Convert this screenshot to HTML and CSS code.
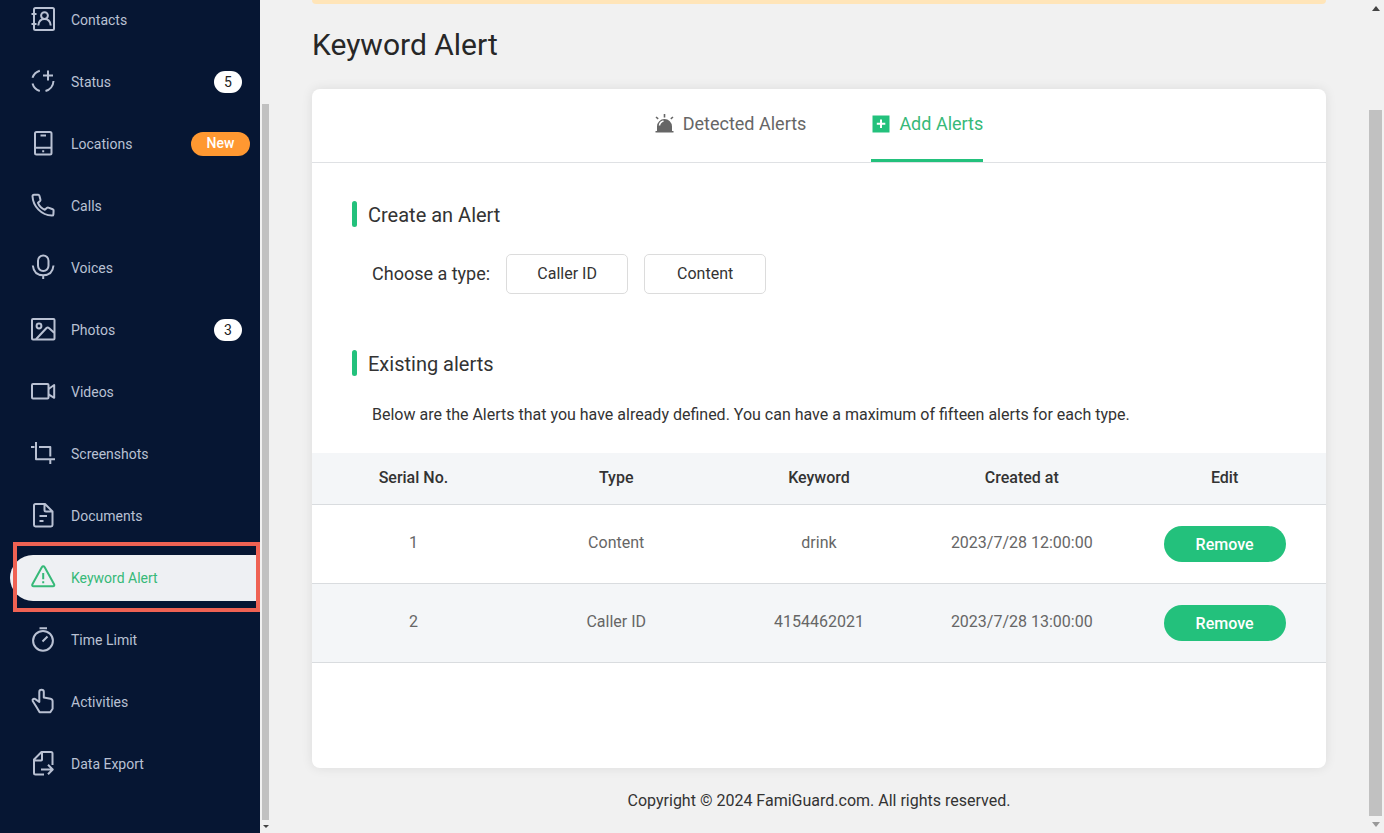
FILE: index.html
```html
<!DOCTYPE html>
<html lang="en">
<head>
<meta charset="utf-8">
<title>Keyword Alert</title>
<link rel="stylesheet" href="styles.css">
</head>
<body>
<div class="app">
  <nav class="sidebar" aria-label="Features">
    <ul class="menu">
      <li><a class="item" href="#"><svg class="icon" viewBox="0 0 26 26"><rect x="4" y="2" width="20" height="22" rx="1.5"/><path d="M1.500 8h5M1.500 18h5"/><circle cx="14.500" cy="9.600" r="3.400"/><path d="M8.300 19.500c.4-3.800 2.600-6.400 6.200-6.400s5.800 2.600 6.200 6.400"/></svg><span class="label">Contacts</span></a></li>
      <li><a class="item" href="#"><svg class="icon" viewBox="0 0 26 26"><path d="M9.800 2.800A11 11 0 0 0 2.500 9.800M2.500 15.500A11 11 0 0 0 9.800 23M15.500 23A11 11 0 0 0 23.500 13M18 2.500v10M13 7.500h10"/></svg><span class="label">Status</span><span class="count">5</span></a></li>
      <li><a class="item" href="#"><svg class="icon" viewBox="0 0 26 26"><rect x="5" y="2" width="16.500" height="22.500" rx="1.500"/><path d="M5 17.800h16.500M10.500 5.500h5.500M12.200 21.200h2"/></svg><span class="label">Locations</span><span class="new">New</span></a></li>
      <li><a class="item" href="#"><svg class="icon" viewBox="0 0 26 26"><path d="M4 2.800h4.200c.6 0 1 .3 1.200.9l1 3.900c.1.500 0 1-.3 1.300L8 10.800c1.200 3.200 3.700 5.500 6.800 7l2.300-2c.4-.3.900-.4 1.300-.2l4.300 1.700c.6.2.9.7.9 1.200l-.2 3.900c0 .8-.7 1.200-1.500 1.200C11.500 23.300 3 14.500 2.500 4.300c0-.9.600-1.500 1.500-1.500z"/></svg><span class="label">Calls</span></a></li>
      <li><a class="item" href="#"><svg class="icon" viewBox="0 0 26 26"><rect x="8" y="1.500" width="10.500" height="15.500" rx="5.200"/><path d="M2.800 11.500c.7 6.300 4.600 9.800 10.400 9.800s9.700-3.500 10.300-9.800M13.200 21.300v3.700"/></svg><span class="label">Voices</span></a></li>
      <li><a class="item" href="#"><svg class="icon" viewBox="0 0 26 26"><rect x="2" y="3" width="22.500" height="20.500" rx="1"/><circle cx="9" cy="10" r="2.400"/><path d="M6 23.300 16.500 12c.8-.8 1.600-.8 2.400 0l5.300 4.800"/></svg><span class="label">Photos</span><span class="count">3</span></a></li>
      <li><a class="item" href="#"><svg class="icon" viewBox="0 0 26 26"><rect x="2" y="6" width="16.500" height="14.500" rx="1"/><path d="m18.500 11 5.700-4v12.800l-5.700-3.500"/></svg><span class="label">Videos</span></a></li>
      <li><a class="item" href="#"><svg class="icon" viewBox="0 0 26 26"><path d="M1 7h3.500M6 2v17.300h19M9 7h11.300v9.500M20.300 19.300v4.700"/></svg><span class="label">Screenshots</span></a></li>
      <li><a class="item" href="#"><svg class="icon" viewBox="0 0 26 26"><path d="M15 2H5.500C4.600 2 4 2.600 4 3.500V23c0 .8.600 1.400 1.500 1.400H21c.9 0 1.500-.6 1.500-1.400V9.500zM14.500 2.300V8c0 .9.600 1.500 1.500 1.500h6.300M9.500 14h7.500M9.500 19h4"/></svg><span class="label">Documents</span></a></li>
      <li class="marked"><a class="item active" href="#" aria-current="page"><svg class="icon" viewBox="0 0 26 26"><path d="M11.800 3.200 2.400 20.300c-.6 1.100 0 2 1.200 2h19.300c1.200 0 1.800-.9 1.200-2L14.700 3.200c-.8-1.200-2.100-1.200-2.900 0zM13.200 9v6.300M13.200 17.300v2"/></svg><span class="label">Keyword Alert</span></a></li>
      <li><a class="item" href="#"><svg class="icon" viewBox="0 0 26 26"><circle cx="13" cy="14.800" r="9.900"/><path d="M9.500 2.200h7.500M12.500 15.500l5-5"/></svg><span class="label">Time Limit</span></a></li>
      <li><a class="item" href="#"><svg class="icon" viewBox="0 0 26 26"><path d="M9.300 14V4c0-3 4.500-3 4.500 0v5.600l6.700 1.200c1.400.3 2.100 1.200 2.100 2.500v7.500l-2.300 3.500H9.600L6.800 19.500 2.700 13c-.7-1.800 1.500-3 3-1.600z"/></svg><span class="label">Activities</span></a></li>
      <li><a class="item" href="#"><svg class="icon" viewBox="0 0 26 26"><path d="M14 24.500H5.500c-.9 0-1.500-.6-1.500-1.500V9.500L11.500 2H21c.9 0 1.500.6 1.500 1.500V15M4.300 10.500h6.900c.5 0 .8-.3.800-.8V2.300M11 19.500h11.500M18 14.800l4.700 4.700-4.700 4.700"/></svg><span class="label">Data Export</span></a></li>
    </ul>
  </nav>
  <div class="rail rail-narrow" aria-hidden="true">
    <span class="thumb"></span>
    <svg class="arrow" viewBox="0 0 8 5"><path d="M1 1h6L4 4z"/></svg>
  </div>
  <main class="main">
    <div class="notice"></div>
    <h1 class="title">Keyword Alert</h1>
    <section class="card">
      <div class="tabs" role="tablist">
        <button class="tab" role="tab" aria-selected="false"><svg class="tab-icon" viewBox="0 0 19 20"><path d="M.5 18.500V17H2v-4.500a7.500 7.500 0 0 1 15 0V17h1.500v1.500z"/><path class="beam" d="M9.500 0v3.500M1 3l2.200 1.800M18 3l-2.200 1.800"/><path class="shine" d="M4.500 11.500c.2-2.500 1.600-4 4-4.600"/></svg>Detected Alerts</button>
        <button class="tab selected" role="tab" aria-selected="true"><svg class="tab-icon" viewBox="0 0 19 20"><path d="M1.500 1.500h17v17h-17z"/><path class="plus" d="M10 5.500v8.500M5.800 9.800h8.500"/></svg>Add Alerts</button>
      </div>
      <h2 class="heading">Create an Alert</h2>
      <div class="types">
        <span class="types-label" id="types">Choose a type:</span>
        <div class="choices" role="group" aria-labelledby="types">
          <button class="choice">Caller ID</button>
          <button class="choice">Content</button>
        </div>
      </div>
      <h2 class="heading">Existing alerts</h2>
      <p class="hint">Below are the Alerts that you have already defined. You can have a maximum of fifteen alerts for each type.</p>
      <table class="alerts">
        <thead>
          <tr><th>Serial No.</th><th>Type</th><th>Keyword</th><th>Created at</th><th>Edit</th></tr>
        </thead>
        <tbody>
          <tr><td>1</td><td>Content</td><td>drink</td><td>2023/7/28 12:00:00</td><td><button class="remove">Remove</button></td></tr>
          <tr><td>2</td><td>Caller ID</td><td>4154462021</td><td>2023/7/28 13:00:00</td><td><button class="remove">Remove</button></td></tr>
        </tbody>
      </table>
    </section>
    <footer class="footer">Copyright © 2024 FamiGuard.com. All rights reserved.</footer>
  </main>
  <div class="rail rail-wide" aria-hidden="true">
    <svg class="arrow" viewBox="0 0 8 5"><path d="M0 5h8L4 0z"/></svg>
    <span class="thumb"></span>
    <svg class="arrow faded" viewBox="0 0 8 5"><path d="M0 0h8L4 5z"/></svg>
  </div>
</div>
</body>
</html>
```

FILE: styles.css
```css
* { box-sizing: border-box; }

body {
  margin: 0;
  background: #f1f1f1;
  color: #333;
  font: 16px/24px Roboto, "Liberation Sans", sans-serif;
}

button {
  border: 0;
  padding: 0;
  background: none;
  color: inherit;
  font: inherit;
  cursor: pointer;
}

.app {
  display: flex;
  height: 100vh;
  overflow: hidden;
}

/* Sidebar */
.sidebar {
  flex: 0 0 260px;
  background: #061633;
}

.menu {
  display: flex;
  flex-direction: column;
  gap: 16px;
  margin: -3px 0 0;
  padding: 0 0 0 10px;
  list-style: none;
}

.item {
  display: flex;
  align-items: center;
  height: 46px;
  padding: 0 18px 0 20px;
  color: #b9c1d3;
  font-size: 14px;
  text-decoration: none;
}

.icon {
  width: 26px;
  height: 26px;
  margin: 0 15px 2px 0;
  fill: none;
  stroke: currentColor;
  stroke-width: 2;
  stroke-linejoin: round;
}

.label { flex: 1; }

.count {
  width: 28px;
  border-radius: 11px;
  background: #fff;
  color: #222;
  line-height: 22px;
  text-align: center;
}

.new {
  width: 59px;
  height: 24px;
  margin-right: -8px;
  border-radius: 12px;
  background: #ff9831;
  color: #fff;
  font-weight: 500;
  line-height: 22px;
  text-align: center;
}

.marked { position: relative; }

.marked::after {
  content: "";
  position: absolute;
  inset: -13px 0 -11px 3px;
  border: 4px solid #ef6253;
  pointer-events: none;
}

.active {
  border-radius: 23px 0 0 23px;
  background: #eef0f3;
  color: #36b978;
}

/* Scroll rails */
.rail {
  display: flex;
  flex-direction: column;
  align-items: center;
}

.rail-narrow {
  flex: 0 0 11px;
  padding-top: 104px;
}

.rail-wide {
  flex: 0 0 17px;
  padding: 6px 0;
}

.thumb {
  flex: 1;
  background: #c1c1c1;
}

.rail-narrow .thumb { width: 7px; }

.rail-wide .thumb {
  width: 13px;
  margin: 99px 0 6px;
}

.arrow {
  width: 8px;
  height: 5px;
  fill: #444;
}

.rail-narrow .arrow { margin: 4px 0; }

.faded { fill: #999; }

/* Content */
.main {
  flex: 1;
  display: flex;
  flex-direction: column;
  padding: 0 41px;
  overflow: hidden;
}

.notice {
  flex: 0 0 4px;
  border-radius: 0 0 6px 6px;
  background: #ffe5b9;
}

.title {
  margin: 21px 0 24px;
  color: #272727;
  font-size: 30px;
  font-weight: 400;
  line-height: 40px;
}

.card {
  flex: 1;
  border-radius: 8px;
  background: #fff;
  box-shadow: 0 0 12px rgba(0, 0, 0, 0.09);
}

.tabs {
  display: flex;
  justify-content: center;
  gap: 65px;
  height: 74px;
  border-bottom: 1px solid #dfe1e4;
}

.tab {
  display: flex;
  align-items: center;
  gap: 9px;
  padding-bottom: 1px;
  border-bottom: 3px solid transparent;
  color: #666;
  font-size: 18px;
}

.tab-icon {
  width: 19px;
  height: 20px;
  fill: currentColor;
}

.selected {
  border-color: #23c17c;
  color: #36b978;
}

.selected .tab-icon { fill: #23c17c; }

.beam {
  fill: none;
  stroke: currentColor;
  stroke-width: 1.6;
}

.shine,
.plus {
  fill: none;
  stroke: #fff;
  stroke-width: 1.5;
}

.plus { stroke-width: 2; }

.heading {
  display: flex;
  align-items: center;
  gap: 11px;
  margin: 38px 40px 0;
  font-size: 20px;
  font-weight: 400;
  line-height: 28px;
}

.heading::before {
  content: "";
  width: 5px;
  height: 26px;
  margin-bottom: 2px;
  border-radius: 3px;
  background: #23c17c;
}

.types {
  display: flex;
  align-items: center;
  gap: 16px;
  margin: 25px 60px 56px;
}

.types-label { font-size: 18px; }

.choices {
  display: flex;
  gap: 16px;
}

.choice {
  width: 122px;
  height: 40px;
  border: 1px solid #dcdcdc;
  border-radius: 5px;
}

.hint { margin: 25px 60px 26px; }

.alerts {
  width: 100%;
  border-collapse: collapse;
  table-layout: fixed;
  text-align: center;
}

.alerts th {
  height: 51px;
  padding: 0 0 1px;
  font-weight: 500;
}

.alerts td {
  height: 79px;
  padding: 0 0 2px;
  color: #666;
}

.alerts td:last-child { padding: 0; }

.alerts tr { border-bottom: 1px solid #d9dcdf; }

.alerts thead tr,
.alerts tbody tr:nth-child(even) { background: #f4f6f8; }

.remove {
  width: 122px;
  height: 36px;
  padding-top: 2px;
  border-radius: 18px;
  background: #23c17c;
  color: #fff;
  font-weight: 500;
}

.footer {
  padding: 21px 0 20px;
  text-align: center;
}
```
